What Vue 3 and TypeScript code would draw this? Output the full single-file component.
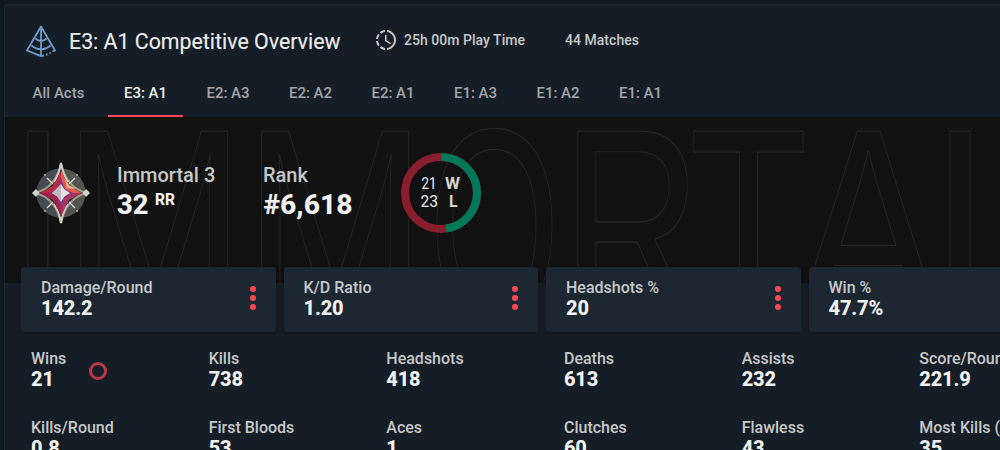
<script setup lang="ts">
interface Stat {
  label: string
  value: string
  ring?: boolean
}

const tabs: string[] = ['All Acts', 'E3: A1', 'E2: A3', 'E2: A2', 'E2: A1', 'E1: A3', 'E1: A2', 'E1: A1']
const activeTab = 'E3: A1'

const cards: Stat[] = [
  { label: 'Damage/Round', value: '142.2' },
  { label: 'K/D Ratio', value: '1.20' },
  { label: 'Headshots %', value: '20' },
  { label: 'Win %', value: '47.7%' },
]

const stats: Stat[] = [
  { label: 'Wins', value: '21', ring: true },
  { label: 'Kills', value: '738' },
  { label: 'Headshots', value: '418' },
  { label: 'Deaths', value: '613' },
  { label: 'Assists', value: '232' },
  { label: 'Score/Round', value: '221.9' },
  { label: 'Kills/Round', value: '0.8' },
  { label: 'First Bloods', value: '53' },
  { label: 'Aces', value: '1' },
  { label: 'Clutches', value: '60' },
  { label: 'Flawless', value: '43' },
  { label: 'Most Kills (Match)', value: '35' },
]

// Watermark letters: pen position and horizontal condensation
const letters: { ch: string; x: number; sx: number }[] = [
  { ch: 'I', x: 3, sx: 0.78 },
  { ch: 'M', x: 57.7, sx: 0.796 },
  { ch: 'M', x: 238.7, sx: 0.796 },
  { ch: 'O', x: 423.8, sx: 0.612 },
  { ch: 'R', x: 557, sx: 0.7 },
  { ch: 'T', x: 684.5, sx: 0.7 },
  { ch: 'A', x: 792, sx: 0.773 },
  { ch: 'L', x: 927.3, sx: 0.78 },
]
</script>

<template>
  <main class="page">
    <section class="panel">
      <header class="head">
        <svg class="act" viewBox="0 0 32 36" width="32" height="36">
          <g fill="none" stroke="#6f9acb" stroke-width="1.8" stroke-linejoin="round">
            <path d="M19 33.500 16 34.200 2 28.500 16 4.500 30 28.500 27.500 29.500" />
            <path d="M16 4.500V34M10.500 16.500Q13 19 16 19T21.500 16.500M6.500 23.500Q11 27.300 16 27.300T25.500 23.500" />
            <path d="M21 32.500h1.600M24.500 31h1.200" />
          </g>
        </svg>
        <svg class="title" width="274" height="34">
          <text x="0" y="25.500" textLength="271.500" lengthAdjust="spacingAndGlyphs">E3: A1 Competitive Overview</text>
        </svg>
        <svg class="clock" viewBox="0 0 24 24" width="24" height="24">
          <path fill="#c8c8c8" d="M13 2.030V4.050C17.390 4.590 20.500 8.580 19.960 12.970C19.500 16.610 16.640 19.500 13 19.930V21.930C18.500 21.380 22.500 16.500 21.950 11C21.500 6.250 17.730 2.500 13 2.030M11 2.060C9.050 2.250 7.190 3 5.670 4.260L7.100 5.740C8.220 4.840 9.570 4.260 11 4.060V2.060M4.260 5.670C3 7.190 2.250 9.040 2.050 11H4.050C4.240 9.580 4.800 8.230 5.690 7.100L4.260 5.670M2.060 13C2.260 14.960 3.030 16.810 4.270 18.330L5.690 16.900C4.810 15.770 4.240 14.420 4.060 13H2.060M7.100 18.370L5.670 19.740C7.180 21 9.040 21.790 11 22V20C9.580 19.820 8.230 19.250 7.100 18.370M12.500 7V12.250L17 14.920L16.250 16.150L11 13V7H12.500Z" />
        </svg>
        <span class="meta">25h 00m Play Time</span>
        <span class="meta matches">44 Matches</span>
      </header>

      <nav class="tabs">
        <a v-for="tab in tabs" :key="tab" class="tab" :class="{ active: tab === activeTab }">{{ tab }}</a>
      </nav>

      <div class="hero">
        <svg class="watermark" width="995" height="166">
          <text v-for="(l, i) in letters" :key="i" :transform="`translate(${l.x} 204) scale(${l.sx} 1)`">{{ l.ch }}</text>
        </svg>
        <svg class="badge" viewBox="0 0 60 64" width="60" height="64">
          <circle cx="29" cy="32" r="24.500" fill="#54534e" />
          <path d="M29 7.500a24.500 24.500 0 0 0 0 49z" fill="#454b51" />
          <path d="M29 2Q34 27 55 32Q34 37 29 62Q24 37 3 32Q24 27 29 2Z" fill="#242528" stroke="#a19e90" stroke-width="2" />
          <path d="M29 2Q31 14 36 21M29 2Q27 14 22 21M29 62Q31 50 36 43M29 62Q27 50 22 43" fill="none" stroke="#d4d0c4" stroke-width="1.800" />
          <path d="M29 10 37 25 29 32 21 25Z" fill="#cf3048" />
          <path d="M29 10 21 25 8 32 29 32Z" fill="#bd2947" />
          <path d="M8 32 21 39 29 55V32Z" fill="#a52047" />
          <path d="M29 10 37 25 50 32H29Z" fill="#e45a53" />
          <path d="M33 18 37 24 44 28 35 27Z" fill="#f2b58f" />
          <path d="M50 32 37 39 29 55V32Z" fill="#a73562" />
          <path d="M29 17 33 28 41 32 33 36 29 48 25 36 17 32 25 28Z" fill="#83337c" />
          <path d="M29 23 32.500 28.500 38 32 32.500 35.500 29 41 25.500 35.500 20 32 25.500 28.500Z" fill="#e2e1e2" />
          <path d="M29 23V41L25.500 35.500 20 32Z" fill="#bbb8be" />
          <path d="M15 17 21 23M43 17 37 23M15 47 21 41M43 47 37 41" stroke="#e4e4e1" stroke-width="1.300" />
          <path d="M4 28 7.500 32 4 36 0 32ZM54 28 58 32 54 36 50.500 32Z" fill="#d2d2cf" />
          <g fill="#bbb"><circle cx="13" cy="14" r=".9" /><circle cx="45" cy="14" r=".9" /><circle cx="13" cy="50" r=".9" /><circle cx="45" cy="50" r=".9" /></g>
        </svg>
        <div class="rating tier">
          <span class="name">Immortal 3</span>
          <svg width="64" height="30">
            <text class="num" x="0" y="23.500" textLength="31.500" lengthAdjust="spacingAndGlyphs">32</text>
            <text class="rr" x="38" y="15" textLength="20" lengthAdjust="spacingAndGlyphs">RR</text>
          </svg>
        </div>
        <div class="rating rank">
          <span class="name">Rank</span>
          <svg width="94" height="32">
            <text class="num" x="0.500" y="23.500" textLength="89" lengthAdjust="spacingAndGlyphs">#6,618</text>
          </svg>
        </div>
        <svg class="record" width="80" height="80" viewBox="0 0 80 80">
          <circle cx="40" cy="40" r="36" fill="none" stroke="#881d2c" stroke-width="8" />
          <circle cx="40" cy="40" r="36" fill="none" stroke="#00795b" stroke-width="8" pathLength="44" stroke-dasharray="21 23" transform="rotate(-90 40 40)" />
          <text x="20.500" y="36" textLength="15" lengthAdjust="spacingAndGlyphs">21</text>
          <text x="19.500" y="54" textLength="17.500" lengthAdjust="spacingAndGlyphs">23</text>
          <text class="wl" x="44" y="36" textLength="15" lengthAdjust="spacingAndGlyphs">W</text>
          <text class="wl" x="48" y="54" textLength="8.500" lengthAdjust="spacingAndGlyphs">L</text>
        </svg>
      </div>

      <div class="cards">
        <article v-for="card in cards" :key="card.label" class="card">
          <div class="stat">
            <span class="label">{{ card.label }}</span>
            <span class="value">{{ card.value }}</span>
          </div>
          <div class="dots"><i /><i /><i /></div>
        </article>
      </div>

      <div class="grid">
        <div v-for="stat in stats" :key="stat.label" class="cell">
          <div class="stat">
            <span class="label">{{ stat.label }}</span>
            <span class="value">{{ stat.value }}</span>
          </div>
          <span v-if="stat.ring" class="ring" />
        </div>
      </div>
    </section>
  </main>
</template>

<style>
html,
body {
  margin: 0;
  overflow: hidden;
  background: #0e1922;
}
</style>

<style scoped>
.page {
  box-sizing: border-box;
  width: 1000px;
  height: 450px;
  padding: 4px 0 0 4px;
  overflow: hidden;
  background: #0e1922;
  font-family: Roboto, "Liberation Sans", sans-serif;
  color: #c8c8c8;
}
.panel {
  box-sizing: border-box;
  width: 1100px;
  height: 500px;
  border: 1px solid #1c2a33;
  border-radius: 4px;
  background: #151d26;
}
.head {
  display: flex;
  align-items: center;
  height: 65px;
  padding: 4px 0 0 20px;
  box-sizing: border-box;
}
.title {
  margin-left: 12px;
  overflow: visible;
  fill: #ececec;
  stroke: #ececec;
  stroke-width: 0.15px;
  font-size: 22px;
}
.clock {
  margin-left: 31px;
}
.meta {
  margin-left: 6px;
  font-size: 14px;
  font-weight: 500;
  letter-spacing: 0.03px;
  white-space: nowrap;
}
.matches {
  margin-left: 40px;
}
.tabs {
  display: flex;
  gap: 7.500px;
  height: 47px;
  padding-left: 11.500px;
}
.tab {
  box-sizing: border-box;
  width: 75px;
  height: 47px;
  border-bottom: 2px solid transparent;
  font-size: 15px;
  font-weight: 500;
  line-height: 46px;
  text-align: center;
  white-space: nowrap;
  color: #a3a5a8;
}
.tab:first-child {
  width: 84px;
}
.tab.active {
  color: #eee;
  border-color: #ff4655;
}
.hero {
  position: relative;
  display: flex;
  height: 166px;
  background: #111;
  overflow: hidden;
}
.watermark {
  position: absolute;
  inset: 0;
}
.watermark text {
  font-family: "Liberation Sans", sans-serif;
  font-size: 276px;
  fill: none;
  stroke: #262626;
  stroke-width: 1.200px;
  stroke-linejoin: round;
}
.badge,
.rating,
.record {
  position: relative;
  flex: none;
}
.badge {
  margin: 44px 0 0 27px;
}
.rating {
  display: flex;
  flex-direction: column;
  margin-top: 45px;
}
.tier {
  width: 146px;
  margin-left: 25px;
}
.rank {
  width: 138px;
}
.name {
  font-size: 20px;
  line-height: 26px;
  font-weight: 500;
}
.rating svg {
  overflow: visible;
  margin-top: 2px;
}
.num {
  font-size: 28px;
  font-weight: 800;
  fill: #f2f2f2;
}
.rr {
  font-size: 16px;
  font-weight: 800;
  fill: #f2f2f2;
}
.record {
  margin-top: 36px;
}
.record text {
  font-size: 16px;
  font-weight: 400;
  fill: #eee;
}
.record .wl {
  font-weight: 700;
  fill: #d8d4cd;
}
.cards {
  position: relative;
  display: grid;
  grid-template-columns: repeat(4, 254.500px);
  gap: 8px;
  margin: -16px 0 0 16px;
}
.card {
  box-sizing: border-box;
  display: flex;
  justify-content: space-between;
  height: 65px;
  padding: 11px 20px 0;
  border-radius: 4px;
  background: #1c2732;
  box-shadow: 0 2px 6px rgba(0, 0, 0, 0.2);
}
.stat {
  display: flex;
  flex-direction: column;
  white-space: nowrap;
}
.label {
  font-size: 16px;
  line-height: 19px;
  font-weight: 500;
}
.value {
  font-size: 20px;
  line-height: 23px;
  font-weight: 800;
  letter-spacing: -0.15px;
  color: #f2f2f2;
}
.dots {
  display: flex;
  flex-direction: column;
  gap: 3px;
  padding-top: 8px;
}
.dots i {
  width: 6px;
  height: 6px;
  border-radius: 50%;
  background: #ff4655;
}
.grid {
  display: grid;
  grid-template-columns: repeat(6, 177.670px);
  grid-auto-rows: 69px;
  margin: 17px 0 0 26px;
}
.cell {
  display: flex;
}
.ring {
  box-sizing: border-box;
  width: 18px;
  height: 18px;
  margin: 13px 0 0 23px;
  border: 3px solid #b93846;
  border-radius: 50%;
}
</style>
